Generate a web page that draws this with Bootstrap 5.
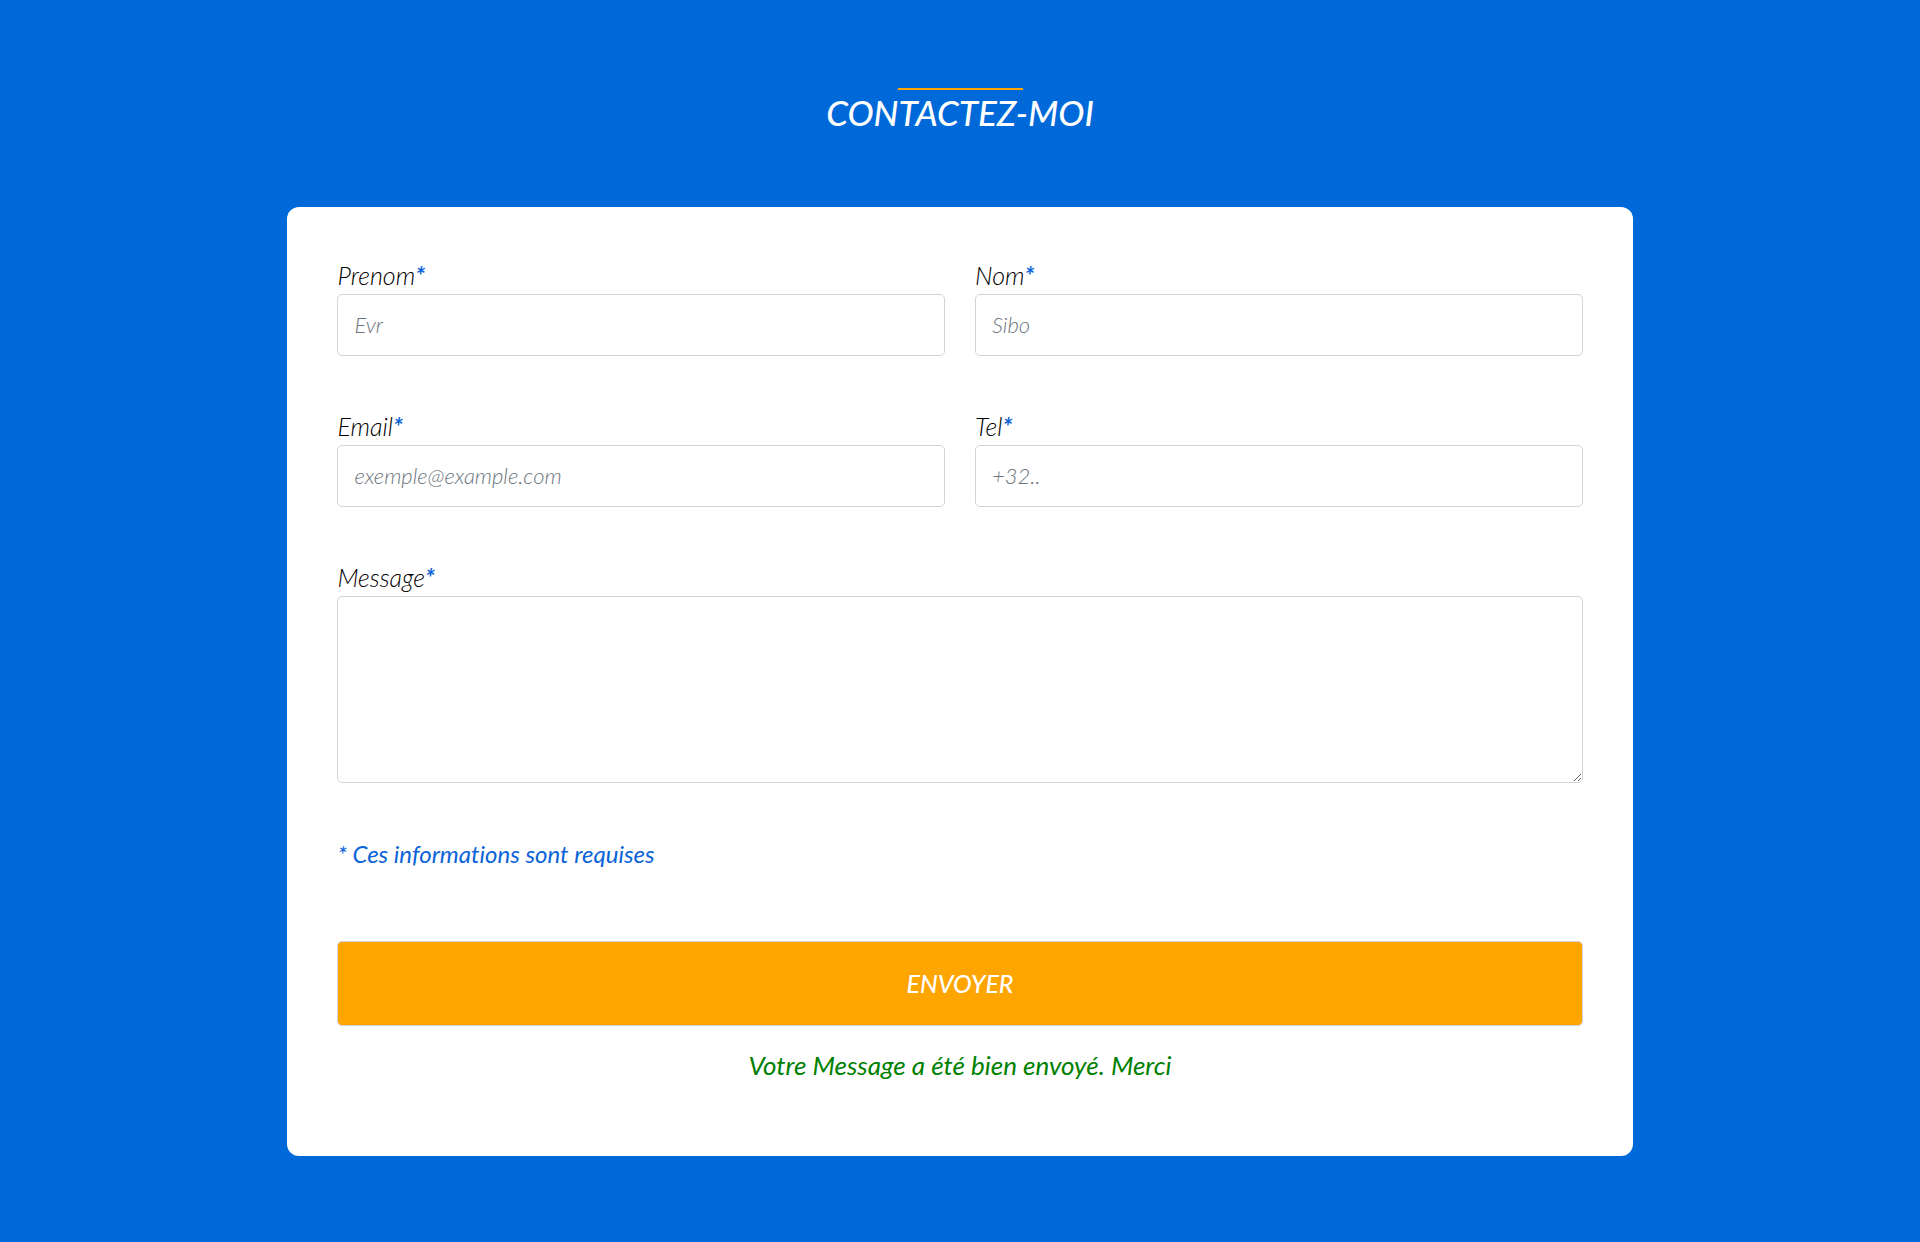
<!DOCTYPE html>
<html lang="fr">
<head>
<meta charset="utf-8">
<meta name="viewport" content="width=device-width, initial-scale=1">
<title>Contactez-moi</title>
<link href="https://cdn.jsdelivr.net/npm/bootstrap@5.3.0/dist/css/bootstrap.min.css" rel="stylesheet">
<style>
body { background: #0069d9; font-family: Lato, sans-serif; font-style: italic; font-size: 24px; line-height: 39px; font-variant-ligatures: none; }
.page-wrap { max-width: 1649px; --bs-gutter-x: 30px; padding-top: 88px; padding-bottom: 86px; }
.divider { width: 125px; height: 2px; background: orange; }
.page-title { font-size: 35px; line-height: 45px; margin-bottom: 72px; font-weight: 500; }
.contact-form { background: #fff; border-radius: 12px; padding: 50px 50px 70px; }
.fields { --bs-gutter-x: 30px; --bs-gutter-y: 52px; }
.form-label { display: block; font-weight: 300; font-size: 25px; line-height: 37px; color: #000; }
.required { color: #0b63d8; font-weight: 700; }
.form-control { font-size: 22px; font-style: italic; font-weight: 300; line-height: 34px; padding: 13px 16px; border: 1px solid #ced4da; border-radius: 5px; background: #fff; }
.form-control::placeholder { color: #6c757d; }
textarea.form-control { min-height: 187px; }
.info-note { color: #0b63d8; margin: 51px 0 68px; }
.btn-send { background: orange; border: 1px solid #ced4da; border-radius: 5px; padding: 22px; color: #fff; font-size: 25px; line-height: 39px; font-style: italic; font-weight: 500; }
.btn-send:hover { background: #f09a00; color: #fff; }
.sent { color: green; font-size: 26px; line-height: 42px; margin: 18px 0 0; }
</style>
</head>
<body>
<main class="container-fluid page-wrap">
  <div class="divider mx-auto"></div>
  <h1 class="page-title text-center text-white text-uppercase">Contactez-moi</h1>
  <div class="row justify-content-center">
    <div class="col-lg-10">
      <form class="contact-form">
        <div class="row fields">
          <div class="col-md-6">
            <label class="form-label mb-0" for="firstname">Prenom<span class="required">*</span></label>
            <input id="firstname" type="text" class="form-control" placeholder="Evr">
          </div>
          <div class="col-md-6">
            <label class="form-label mb-0" for="name">Nom<span class="required">*</span></label>
            <input id="name" type="text" class="form-control" placeholder="Sibo">
          </div>
          <div class="col-md-6">
            <label class="form-label mb-0" for="email">Email<span class="required">*</span></label>
            <input id="email" type="email" class="form-control" placeholder="exemple@example.com">
          </div>
          <div class="col-md-6">
            <label class="form-label mb-0" for="phone">Tel<span class="required">*</span></label>
            <input id="phone" type="tel" class="form-control" placeholder="+32..">
          </div>
          <div class="col-12">
            <label class="form-label mb-0" for="message">Message<span class="required">*</span></label>
            <textarea id="message" class="form-control d-block" rows="4"></textarea>
          </div>
        </div>
        <p class="info-note">* Ces informations sont requises</p>
        <button type="submit" class="btn btn-send w-100 d-block">ENVOYER</button>
        <p class="sent text-center">Votre Message a été bien envoyé. Merci</p>
      </form>
    </div>
  </div>
</main>
<script src="https://cdn.jsdelivr.net/npm/bootstrap@5.3.0/dist/js/bootstrap.bundle.min.js"></script>
</body>
</html>
